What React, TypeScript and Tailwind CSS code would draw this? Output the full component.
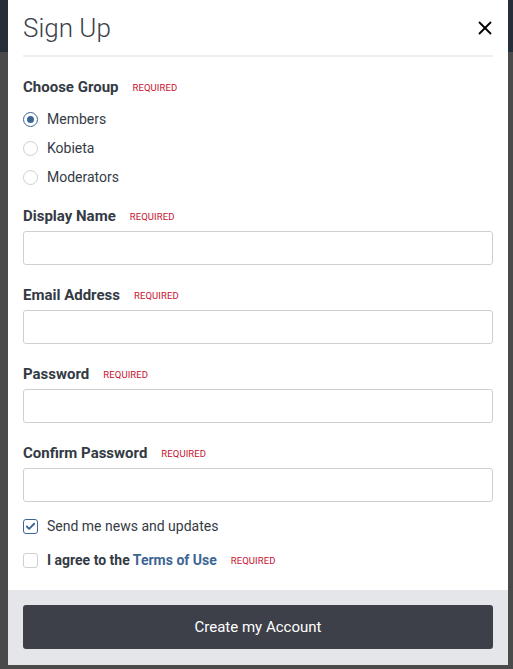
import { Check, X } from 'lucide-react';

function Required() {
  return (
    <span className="ml-[14px] translate-y-[1px] text-[9.5px] font-normal uppercase tracking-[0.01em] text-[#c8102e]">
      Required
    </span>
  );
}

function Field({ label }: { label: string }) {
  return (
    <div className="mt-[20px]">
      <div className="flex h-[20px] items-center">
        <span className="text-[15px] font-bold text-[#333a44]">{label}</span>
        <Required />
      </div>
      <div className="mt-[5px] h-[34px] rounded-[3px] border border-[#cfcfcf] bg-white" />
    </div>
  );
}

function Radio({ label, checked }: { label: string; checked?: boolean }) {
  return (
    <div className="flex h-[29px] items-center">
      <span
        className={`flex h-[15px] w-[15px] items-center justify-center rounded-full border ${
          checked ? 'border-[#3d6594]' : 'border-[#cfcfcf]'
        }`}
      >
        {checked && <span className="h-[7px] w-[7px] rounded-full bg-[#3d6594]" />}
      </span>
      <span className="ml-[9px] text-[14px] text-[#353b45]">{label}</span>
    </div>
  );
}

export default function App() {
  return (
    <div
      className="flex h-[669px] w-[513px] overflow-hidden"
      style={{ fontFamily: 'Roboto, "Liberation Sans", sans-serif' }}
    >
      {/* backdrop strip */}
      <div className="flex w-[8px] flex-col bg-[#4a4a4a]">
        <div className="h-[52px] bg-[#262e3a]" />
      </div>

      <div className="flex w-[500px] flex-col bg-[#4a4a4a]">
        <div className="flex h-[665px] flex-col bg-white">
          {/* header */}
          <div className="px-[15px]">
            <div className="flex h-[57px] items-center justify-between border-b-2 border-[#efefef] pt-[1px]">
              <h1 className="text-[26px] font-light leading-none text-[#3b4049]">Sign Up</h1>
              <X className="mr-[-3px] h-[22px] w-[22px] text-black" strokeWidth={2} />
            </div>
          </div>

          {/* body */}
          <div className="flex-1 px-[15px] pt-[20px]">
            <div className="flex h-[20px] items-center">
              <span className="text-[15px] font-bold text-[#333a44]">Choose Group</span>
              <Required />
            </div>
            <div className="mt-[8px]">
              <Radio label="Members" checked />
              <Radio label="Kobieta" />
              <Radio label="Moderators" />
            </div>

            <div className="mt-[-6px]">
              <Field label="Display Name" />
            </div>
            <Field label="Email Address" />
            <Field label="Password" />
            <Field label="Confirm Password" />

            <div className="mt-[14px] flex h-[20px] items-center">
              <span className="flex h-[15px] w-[15px] items-center justify-center rounded-[3px] border-[1.5px] border-[#3d6594]">
                <Check className="h-[11px] w-[11px] text-[#3d6594]" strokeWidth={4} />
              </span>
              <span className="ml-[9px] text-[14px] text-[#353b45]">Send me news and updates</span>
            </div>
            <div className="mt-[14px] flex h-[20px] items-center">
              <span className="h-[15px] w-[15px] rounded-[3px] border border-[#cfcfcf]" />
              <span className="ml-[9px] text-[14px] font-bold text-[#333a44]">
                I agree to the <span className="text-[#3d6594]">Terms of Use</span>
              </span>
              <Required />
            </div>
          </div>

          {/* footer */}
          <div className="h-[75px] bg-[#e5e6ea] px-[15px] pt-[15px]">
            <button className="flex h-[44px] w-full items-center justify-center rounded-[3px] bg-[#3d4049] text-[15px] text-white">
              Create my Account
            </button>
          </div>
        </div>
      </div>

      <div className="flex w-[5px] flex-col bg-[#4a4a4a]">
        <div className="h-[52px] bg-[#262e3a]" />
      </div>
    </div>
  );
}
